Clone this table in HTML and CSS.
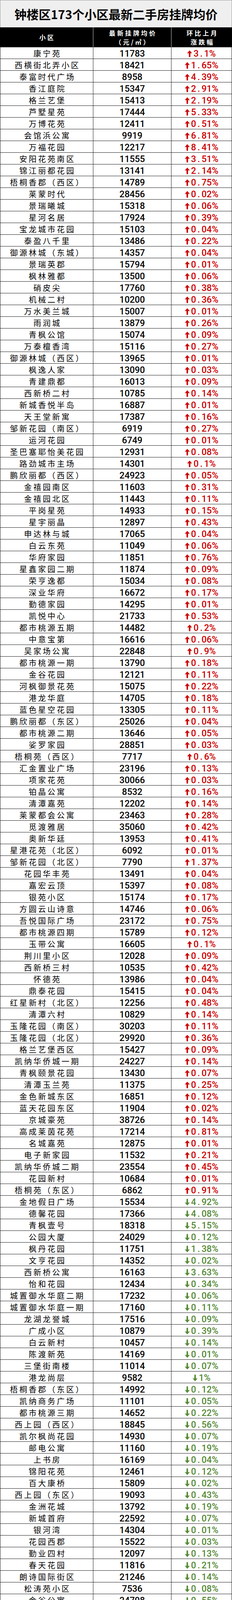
FILE: index.html
```html
<!DOCTYPE html>
<html lang="zh-CN">
<head>
<meta charset="utf-8">
<meta name="viewport" content="width=594, initial-scale=1">
<title>钟楼区173个小区最新二手房挂牌均价</title>
<link rel="stylesheet" href="styles.css">
</head>
<body>
<svg class="defs" aria-hidden="true"><defs>
<symbol id="au" viewBox="0 0 13 17"><path d="M6.5 0 L13 7.6 L8.7 7 L8.2 17 L4.8 17 L4.3 7 L0 7.6 Z"/></symbol>
<symbol id="ad" viewBox="0 0 13 17"><path d="M6.5 17 L13 9.4 L8.7 10 L8.2 0 L4.8 0 L4.3 10 L0 9.4 Z"/></symbol>
</defs></svg>
<div class="sheet">
<div class="title">钟楼区173个小区最新二手房挂牌均价</div>
<div class="head">
<div class="hc c1"><span>小区</span></div>
<div class="hc c2"><span>最新挂牌均价</span><span>（元/㎡）</span></div>
<div class="hc c3"><span>环比上月</span><span>涨跌幅</span></div>
</div>
<div class="row"><div class="name">康宁苑</div><div class="price">11783</div><div class="chg up"><svg class="arw"><use href="#au"/></svg>3<span class="pt">.</span>1%</div></div>
<div class="row"><div class="name">西横街北弄小区</div><div class="price">18421</div><div class="chg up"><svg class="arw"><use href="#au"/></svg>1<span class="pt">.</span>65%</div></div>
<div class="row"><div class="name">泰富时代广场</div><div class="price">8958</div><div class="chg up"><svg class="arw"><use href="#au"/></svg>4<span class="pt">.</span>39%</div></div>
<div class="row"><div class="name">香江庭院</div><div class="price">15347</div><div class="chg up"><svg class="arw"><use href="#au"/></svg>2<span class="pt">.</span>91%</div></div>
<div class="row"><div class="name">格兰艺堡</div><div class="price">15413</div><div class="chg up"><svg class="arw"><use href="#au"/></svg>2<span class="pt">.</span>19%</div></div>
<div class="row"><div class="name">芦墅星苑</div><div class="price">17444</div><div class="chg up"><svg class="arw"><use href="#au"/></svg>5<span class="pt">.</span>33%</div></div>
<div class="row"><div class="name">万博花苑</div><div class="price">12411</div><div class="chg up"><svg class="arw"><use href="#au"/></svg>0<span class="pt">.</span>51%</div></div>
<div class="row"><div class="name">会馆浜公寓</div><div class="price">9919</div><div class="chg up"><svg class="arw"><use href="#au"/></svg>6<span class="pt">.</span>81%</div></div>
<div class="row"><div class="name">万福花园</div><div class="price">12217</div><div class="chg up"><svg class="arw"><use href="#au"/></svg>8<span class="pt">.</span>41%</div></div>
<div class="row"><div class="name">安阳花苑南区</div><div class="price">11555</div><div class="chg up"><svg class="arw"><use href="#au"/></svg>3<span class="pt">.</span>51%</div></div>
<div class="row"><div class="name">锦江丽都花园</div><div class="price">13141</div><div class="chg up"><svg class="arw"><use href="#au"/></svg>2<span class="pt">.</span>14%</div></div>
<div class="row"><div class="name">梧桐香郡（西区）</div><div class="price">14789</div><div class="chg up"><svg class="arw"><use href="#au"/></svg>0<span class="pt">.</span>75%</div></div>
<div class="row"><div class="name">莱蒙时代</div><div class="price">28456</div><div class="chg up"><svg class="arw"><use href="#au"/></svg>0<span class="pt">.</span>02%</div></div>
<div class="row"><div class="name">景瑞曦城</div><div class="price">15318</div><div class="chg up"><svg class="arw"><use href="#au"/></svg>0<span class="pt">.</span>06%</div></div>
<div class="row"><div class="name">星河名居</div><div class="price">17924</div><div class="chg up"><svg class="arw"><use href="#au"/></svg>0<span class="pt">.</span>39%</div></div>
<div class="row"><div class="name">宝龙城市花园</div><div class="price">15103</div><div class="chg up"><svg class="arw"><use href="#au"/></svg>0<span class="pt">.</span>04%</div></div>
<div class="row"><div class="name">泰盈八千里</div><div class="price">13486</div><div class="chg up"><svg class="arw"><use href="#au"/></svg>0<span class="pt">.</span>22%</div></div>
<div class="row"><div class="name">御源林城（东城）</div><div class="price">14357</div><div class="chg up"><svg class="arw"><use href="#au"/></svg>0<span class="pt">.</span>04%</div></div>
<div class="row"><div class="name">景瑞英郡</div><div class="price">15794</div><div class="chg up"><svg class="arw"><use href="#au"/></svg>0<span class="pt">.</span>01%</div></div>
<div class="row"><div class="name">枫林雅都</div><div class="price">13500</div><div class="chg up"><svg class="arw"><use href="#au"/></svg>0<span class="pt">.</span>06%</div></div>
<div class="row"><div class="name">硝皮尖</div><div class="price">17760</div><div class="chg up"><svg class="arw"><use href="#au"/></svg>0<span class="pt">.</span>38%</div></div>
<div class="row"><div class="name">机械二村</div><div class="price">10200</div><div class="chg up"><svg class="arw"><use href="#au"/></svg>0<span class="pt">.</span>36%</div></div>
<div class="row"><div class="name">万水美兰城</div><div class="price">15007</div><div class="chg up"><svg class="arw"><use href="#au"/></svg>0<span class="pt">.</span>01%</div></div>
<div class="row"><div class="name">雨润城</div><div class="price">13879</div><div class="chg up"><svg class="arw"><use href="#au"/></svg>0<span class="pt">.</span>26%</div></div>
<div class="row"><div class="name">青枫公馆</div><div class="price">15074</div><div class="chg up"><svg class="arw"><use href="#au"/></svg>0<span class="pt">.</span>09%</div></div>
<div class="row"><div class="name">万泰檀香湾</div><div class="price">15116</div><div class="chg up"><svg class="arw"><use href="#au"/></svg>0<span class="pt">.</span>27%</div></div>
<div class="row"><div class="name">御源林城（西区）</div><div class="price">13965</div><div class="chg up"><svg class="arw"><use href="#au"/></svg>0<span class="pt">.</span>01%</div></div>
<div class="row"><div class="name">枫逸人家</div><div class="price">13090</div><div class="chg up"><svg class="arw"><use href="#au"/></svg>0<span class="pt">.</span>03%</div></div>
<div class="row"><div class="name">青建鼎都</div><div class="price">16013</div><div class="chg up"><svg class="arw"><use href="#au"/></svg>0<span class="pt">.</span>09%</div></div>
<div class="row"><div class="name">西新桥二村</div><div class="price">10785</div><div class="chg up"><svg class="arw"><use href="#au"/></svg>0<span class="pt">.</span>14%</div></div>
<div class="row"><div class="name">新城香悦半岛</div><div class="price">16887</div><div class="chg up"><svg class="arw"><use href="#au"/></svg>0<span class="pt">.</span>01%</div></div>
<div class="row"><div class="name">天王堂新寓</div><div class="price">17387</div><div class="chg up"><svg class="arw"><use href="#au"/></svg>0<span class="pt">.</span>16%</div></div>
<div class="row"><div class="name">邹新花园（南区）</div><div class="price">6919</div><div class="chg up"><svg class="arw"><use href="#au"/></svg>0<span class="pt">.</span>27%</div></div>
<div class="row"><div class="name">运河花园</div><div class="price">6749</div><div class="chg up"><svg class="arw"><use href="#au"/></svg>0<span class="pt">.</span>01%</div></div>
<div class="row"><div class="name">圣巴塞耶怡美花园</div><div class="price">12931</div><div class="chg up"><svg class="arw"><use href="#au"/></svg>0<span class="pt">.</span>08%</div></div>
<div class="row"><div class="name">路劲城市主场</div><div class="price">14301</div><div class="chg up"><svg class="arw"><use href="#au"/></svg>0<span class="pt">.</span>1%</div></div>
<div class="row"><div class="name">鹏欣丽都（西区）</div><div class="price">24923</div><div class="chg up"><svg class="arw"><use href="#au"/></svg>0<span class="pt">.</span>05%</div></div>
<div class="row"><div class="name">金禧园南区</div><div class="price">11603</div><div class="chg up"><svg class="arw"><use href="#au"/></svg>0<span class="pt">.</span>31%</div></div>
<div class="row"><div class="name">金禧园北区</div><div class="price">11443</div><div class="chg up"><svg class="arw"><use href="#au"/></svg>0<span class="pt">.</span>11%</div></div>
<div class="row"><div class="name">平岗星苑</div><div class="price">14933</div><div class="chg up"><svg class="arw"><use href="#au"/></svg>0<span class="pt">.</span>15%</div></div>
<div class="row"><div class="name">星宇丽晶</div><div class="price">12897</div><div class="chg up"><svg class="arw"><use href="#au"/></svg>0<span class="pt">.</span>43%</div></div>
<div class="row"><div class="name">申达林与城</div><div class="price">17065</div><div class="chg up"><svg class="arw"><use href="#au"/></svg>0<span class="pt">.</span>04%</div></div>
<div class="row"><div class="name">白云东苑</div><div class="price">11049</div><div class="chg up"><svg class="arw"><use href="#au"/></svg>0<span class="pt">.</span>06%</div></div>
<div class="row"><div class="name">华府家园</div><div class="price">11851</div><div class="chg up"><svg class="arw"><use href="#au"/></svg>0<span class="pt">.</span>76%</div></div>
<div class="row"><div class="name">星鑫家园二期</div><div class="price">11874</div><div class="chg up"><svg class="arw"><use href="#au"/></svg>0<span class="pt">.</span>09%</div></div>
<div class="row"><div class="name">荣亨逸都</div><div class="price">15034</div><div class="chg up"><svg class="arw"><use href="#au"/></svg>0<span class="pt">.</span>08%</div></div>
<div class="row"><div class="name">深业华府</div><div class="price">16672</div><div class="chg up"><svg class="arw"><use href="#au"/></svg>0<span class="pt">.</span>17%</div></div>
<div class="row"><div class="name">勤德家园</div><div class="price">14295</div><div class="chg up"><svg class="arw"><use href="#au"/></svg>0<span class="pt">.</span>01%</div></div>
<div class="row"><div class="name">凯悦中心</div><div class="price">21733</div><div class="chg up"><svg class="arw"><use href="#au"/></svg>0<span class="pt">.</span>53%</div></div>
<div class="row"><div class="name">都市桃源五期</div><div class="price">14482</div><div class="chg up"><svg class="arw"><use href="#au"/></svg>0<span class="pt">.</span>2%</div></div>
<div class="row"><div class="name">中意宝第</div><div class="price">16616</div><div class="chg up"><svg class="arw"><use href="#au"/></svg>0<span class="pt">.</span>06%</div></div>
<div class="row"><div class="name">吴家场公寓</div><div class="price">22848</div><div class="chg up"><svg class="arw"><use href="#au"/></svg>0<span class="pt">.</span>9%</div></div>
<div class="row"><div class="name">都市桃源一期</div><div class="price">13790</div><div class="chg up"><svg class="arw"><use href="#au"/></svg>0<span class="pt">.</span>18%</div></div>
<div class="row"><div class="name">金谷花园</div><div class="price">12121</div><div class="chg up"><svg class="arw"><use href="#au"/></svg>0<span class="pt">.</span>11%</div></div>
<div class="row"><div class="name">河枫御景花苑</div><div class="price">15075</div><div class="chg up"><svg class="arw"><use href="#au"/></svg>0<span class="pt">.</span>22%</div></div>
<div class="row"><div class="name">港龙华庭</div><div class="price">14705</div><div class="chg up"><svg class="arw"><use href="#au"/></svg>0<span class="pt">.</span>18%</div></div>
<div class="row"><div class="name">蓝色星空花园</div><div class="price">13305</div><div class="chg up"><svg class="arw"><use href="#au"/></svg>0<span class="pt">.</span>11%</div></div>
<div class="row"><div class="name">鹏欣丽都（东区）</div><div class="price">25026</div><div class="chg up"><svg class="arw"><use href="#au"/></svg>0<span class="pt">.</span>04%</div></div>
<div class="row"><div class="name">都市桃源二期</div><div class="price">13646</div><div class="chg up"><svg class="arw"><use href="#au"/></svg>0<span class="pt">.</span>05%</div></div>
<div class="row"><div class="name">娑罗家园</div><div class="price">28851</div><div class="chg up"><svg class="arw"><use href="#au"/></svg>0<span class="pt">.</span>03%</div></div>
<div class="row"><div class="name">梧桐苑（西区）</div><div class="price">7717</div><div class="chg up"><svg class="arw"><use href="#au"/></svg>0<span class="pt">.</span>6%</div></div>
<div class="row"><div class="name">汇金置业广场</div><div class="price">23196</div><div class="chg up"><svg class="arw"><use href="#au"/></svg>0<span class="pt">.</span>13%</div></div>
<div class="row"><div class="name">项家花苑</div><div class="price">30066</div><div class="chg up"><svg class="arw"><use href="#au"/></svg>0<span class="pt">.</span>03%</div></div>
<div class="row"><div class="name">铂晶公寓</div><div class="price">8532</div><div class="chg up"><svg class="arw"><use href="#au"/></svg>0<span class="pt">.</span>16%</div></div>
<div class="row"><div class="name">清潭嘉苑</div><div class="price">12202</div><div class="chg up"><svg class="arw"><use href="#au"/></svg>0<span class="pt">.</span>14%</div></div>
<div class="row"><div class="name">莱蒙都会公寓</div><div class="price">23463</div><div class="chg up"><svg class="arw"><use href="#au"/></svg>0<span class="pt">.</span>28%</div></div>
<div class="row"><div class="name">觅渡雅居</div><div class="price">35060</div><div class="chg up"><svg class="arw"><use href="#au"/></svg>0<span class="pt">.</span>42%</div></div>
<div class="row"><div class="name">奥新华廷</div><div class="price">13953</div><div class="chg up"><svg class="arw"><use href="#au"/></svg>0<span class="pt">.</span>41%</div></div>
<div class="row"><div class="name">星港花苑（北区）</div><div class="price">6092</div><div class="chg up"><svg class="arw"><use href="#au"/></svg>0<span class="pt">.</span>01%</div></div>
<div class="row"><div class="name">邹新花园（北区）</div><div class="price">7790</div><div class="chg up"><svg class="arw"><use href="#au"/></svg>1<span class="pt">.</span>37%</div></div>
<div class="row"><div class="name">花园华丰苑</div><div class="price">13491</div><div class="chg up"><svg class="arw"><use href="#au"/></svg>0<span class="pt">.</span>04%</div></div>
<div class="row"><div class="name">嘉宏云顶</div><div class="price">15397</div><div class="chg up"><svg class="arw"><use href="#au"/></svg>0<span class="pt">.</span>08%</div></div>
<div class="row"><div class="name">银苑小区</div><div class="price">15174</div><div class="chg up"><svg class="arw"><use href="#au"/></svg>0<span class="pt">.</span>17%</div></div>
<div class="row"><div class="name">方圆云山诗意</div><div class="price">14746</div><div class="chg up"><svg class="arw"><use href="#au"/></svg>0<span class="pt">.</span>06%</div></div>
<div class="row"><div class="name">吾悦国际广场</div><div class="price">23172</div><div class="chg up"><svg class="arw"><use href="#au"/></svg>0<span class="pt">.</span>75%</div></div>
<div class="row"><div class="name">都市桃源四期</div><div class="price">15789</div><div class="chg up"><svg class="arw"><use href="#au"/></svg>0<span class="pt">.</span>12%</div></div>
<div class="row"><div class="name">玉带公寓</div><div class="price">16605</div><div class="chg up"><svg class="arw"><use href="#au"/></svg>0<span class="pt">.</span>1%</div></div>
<div class="row"><div class="name">荆川里小区</div><div class="price">12028</div><div class="chg up"><svg class="arw"><use href="#au"/></svg>0<span class="pt">.</span>09%</div></div>
<div class="row"><div class="name">西新桥三村</div><div class="price">10535</div><div class="chg up"><svg class="arw"><use href="#au"/></svg>0<span class="pt">.</span>42%</div></div>
<div class="row"><div class="name">怀德苑</div><div class="price">13986</div><div class="chg up"><svg class="arw"><use href="#au"/></svg>0<span class="pt">.</span>04%</div></div>
<div class="row"><div class="name">鼎泰花园</div><div class="price">15415</div><div class="chg up"><svg class="arw"><use href="#au"/></svg>0<span class="pt">.</span>04%</div></div>
<div class="row"><div class="name">红星新村（北区）</div><div class="price">12256</div><div class="chg up"><svg class="arw"><use href="#au"/></svg>0<span class="pt">.</span>48%</div></div>
<div class="row"><div class="name">清潭六村</div><div class="price">10829</div><div class="chg up"><svg class="arw"><use href="#au"/></svg>0<span class="pt">.</span>14%</div></div>
<div class="row"><div class="name">玉隆花园（南区）</div><div class="price">30203</div><div class="chg up"><svg class="arw"><use href="#au"/></svg>0<span class="pt">.</span>11%</div></div>
<div class="row"><div class="name">玉隆花园（北区）</div><div class="price">29920</div><div class="chg up"><svg class="arw"><use href="#au"/></svg>0<span class="pt">.</span>36%</div></div>
<div class="row"><div class="name">格兰艺堡西区</div><div class="price">15427</div><div class="chg up"><svg class="arw"><use href="#au"/></svg>0<span class="pt">.</span>09%</div></div>
<div class="row"><div class="name">凯纳华侨城一期</div><div class="price">24227</div><div class="chg up"><svg class="arw"><use href="#au"/></svg>0<span class="pt">.</span>14%</div></div>
<div class="row"><div class="name">青枫颐景花园</div><div class="price">13430</div><div class="chg up"><svg class="arw"><use href="#au"/></svg>0<span class="pt">.</span>07%</div></div>
<div class="row"><div class="name">清潭玉兰苑</div><div class="price">11375</div><div class="chg up"><svg class="arw"><use href="#au"/></svg>0<span class="pt">.</span>25%</div></div>
<div class="row"><div class="name">金色新城东区</div><div class="price">16851</div><div class="chg up"><svg class="arw"><use href="#au"/></svg>0<span class="pt">.</span>12%</div></div>
<div class="row"><div class="name">蓝天花园东区</div><div class="price">11904</div><div class="chg up"><svg class="arw"><use href="#au"/></svg>0<span class="pt">.</span>02%</div></div>
<div class="row"><div class="name">京城豪苑</div><div class="price">38726</div><div class="chg up"><svg class="arw"><use href="#au"/></svg>0<span class="pt">.</span>14%</div></div>
<div class="row"><div class="name">高成莱茵花苑</div><div class="price">17214</div><div class="chg up"><svg class="arw"><use href="#au"/></svg>0<span class="pt">.</span>81%</div></div>
<div class="row"><div class="name">名城嘉苑</div><div class="price">12875</div><div class="chg up"><svg class="arw"><use href="#au"/></svg>0<span class="pt">.</span>01%</div></div>
<div class="row"><div class="name">电子新家园</div><div class="price">11532</div><div class="chg up"><svg class="arw"><use href="#au"/></svg>0<span class="pt">.</span>21%</div></div>
<div class="row"><div class="name">凯纳华侨城二期</div><div class="price">23554</div><div class="chg up"><svg class="arw"><use href="#au"/></svg>0<span class="pt">.</span>45%</div></div>
<div class="row"><div class="name">花园新村</div><div class="price">10684</div><div class="chg up"><svg class="arw"><use href="#au"/></svg>0<span class="pt">.</span>01%</div></div>
<div class="row"><div class="name">梧桐苑（东区）</div><div class="price">6862</div><div class="chg up"><svg class="arw"><use href="#au"/></svg>0<span class="pt">.</span>91%</div></div>
<div class="row"><div class="name">金地假日广场</div><div class="price">15534</div><div class="chg down"><svg class="arw"><use href="#ad"/></svg>4<span class="pt">.</span>92%</div></div>
<div class="row"><div class="name">德馨花园</div><div class="price">17366</div><div class="chg down"><svg class="arw"><use href="#ad"/></svg>4<span class="pt">.</span>08%</div></div>
<div class="row"><div class="name">青枫壹号</div><div class="price">18318</div><div class="chg down"><svg class="arw"><use href="#ad"/></svg>5<span class="pt">.</span>15%</div></div>
<div class="row"><div class="name">公园大厦</div><div class="price">24029</div><div class="chg down"><svg class="arw"><use href="#ad"/></svg>0<span class="pt">.</span>12%</div></div>
<div class="row"><div class="name">枫丹花园</div><div class="price">11751</div><div class="chg down"><svg class="arw"><use href="#ad"/></svg>1<span class="pt">.</span>38%</div></div>
<div class="row"><div class="name">文亨花园</div><div class="price">14352</div><div class="chg down"><svg class="arw"><use href="#ad"/></svg>0<span class="pt">.</span>02%</div></div>
<div class="row"><div class="name">西新桥公寓</div><div class="price">16163</div><div class="chg down"><svg class="arw"><use href="#ad"/></svg>3<span class="pt">.</span>63%</div></div>
<div class="row"><div class="name">怡和花园</div><div class="price">12434</div><div class="chg down"><svg class="arw"><use href="#ad"/></svg>0<span class="pt">.</span>34%</div></div>
<div class="row"><div class="name">城置御水华庭二期</div><div class="price">17232</div><div class="chg down"><svg class="arw"><use href="#ad"/></svg>0<span class="pt">.</span>06%</div></div>
<div class="row"><div class="name">城置御水华庭一期</div><div class="price">17160</div><div class="chg down"><svg class="arw"><use href="#ad"/></svg>0<span class="pt">.</span>11%</div></div>
<div class="row"><div class="name">龙湖龙誉城</div><div class="price">17516</div><div class="chg down"><svg class="arw"><use href="#ad"/></svg>0<span class="pt">.</span>09%</div></div>
<div class="row"><div class="name">广成小区</div><div class="price">10879</div><div class="chg down"><svg class="arw"><use href="#ad"/></svg>0<span class="pt">.</span>39%</div></div>
<div class="row"><div class="name">白云新村</div><div class="price">10457</div><div class="chg down"><svg class="arw"><use href="#ad"/></svg>0<span class="pt">.</span>14%</div></div>
<div class="row"><div class="name">陈渡新苑</div><div class="price">14169</div><div class="chg down"><svg class="arw"><use href="#ad"/></svg>0<span class="pt">.</span>01%</div></div>
<div class="row"><div class="name">三堡街南楼</div><div class="price">11014</div><div class="chg down"><svg class="arw"><use href="#ad"/></svg>0<span class="pt">.</span>07%</div></div>
<div class="row"><div class="name">港龙尚层</div><div class="price">9582</div><div class="chg down"><svg class="arw"><use href="#ad"/></svg>1%</div></div>
<div class="row"><div class="name">梧桐香郡（东区）</div><div class="price">14992</div><div class="chg down"><svg class="arw"><use href="#ad"/></svg>0<span class="pt">.</span>12%</div></div>
<div class="row"><div class="name">凯纳商务广场</div><div class="price">11101</div><div class="chg down"><svg class="arw"><use href="#ad"/></svg>0<span class="pt">.</span>05%</div></div>
<div class="row"><div class="name">都市桃源三期</div><div class="price">14652</div><div class="chg down"><svg class="arw"><use href="#ad"/></svg>0<span class="pt">.</span>22%</div></div>
<div class="row"><div class="name">西上园（西区）</div><div class="price">18845</div><div class="chg down"><svg class="arw"><use href="#ad"/></svg>0<span class="pt">.</span>56%</div></div>
<div class="row"><div class="name">凯尔枫尚花园</div><div class="price">14930</div><div class="chg down"><svg class="arw"><use href="#ad"/></svg>0<span class="pt">.</span>07%</div></div>
<div class="row"><div class="name">邮电公寓</div><div class="price">11160</div><div class="chg down"><svg class="arw"><use href="#ad"/></svg>0<span class="pt">.</span>19%</div></div>
<div class="row"><div class="name">上书房</div><div class="price">16169</div><div class="chg down"><svg class="arw"><use href="#ad"/></svg>0<span class="pt">.</span>04%</div></div>
<div class="row"><div class="name">锦阳花苑</div><div class="price">12461</div><div class="chg down"><svg class="arw"><use href="#ad"/></svg>0<span class="pt">.</span>12%</div></div>
<div class="row"><div class="name">百大康桥</div><div class="price">15809</div><div class="chg down"><svg class="arw"><use href="#ad"/></svg>0<span class="pt">.</span>02%</div></div>
<div class="row"><div class="name">西上园（东区）</div><div class="price">19093</div><div class="chg down"><svg class="arw"><use href="#ad"/></svg>0<span class="pt">.</span>43%</div></div>
<div class="row"><div class="name">金洲花城</div><div class="price">13792</div><div class="chg down"><svg class="arw"><use href="#ad"/></svg>0<span class="pt">.</span>19%</div></div>
<div class="row"><div class="name">新城首府</div><div class="price">22592</div><div class="chg down"><svg class="arw"><use href="#ad"/></svg>0<span class="pt">.</span>07%</div></div>
<div class="row"><div class="name">银河湾</div><div class="price">14304</div><div class="chg down"><svg class="arw"><use href="#ad"/></svg>0<span class="pt">.</span>01%</div></div>
<div class="row"><div class="name">花园西郡</div><div class="price">15522</div><div class="chg down"><svg class="arw"><use href="#ad"/></svg>0<span class="pt">.</span>03%</div></div>
<div class="row"><div class="name">勤业四村</div><div class="price">12097</div><div class="chg down"><svg class="arw"><use href="#ad"/></svg>0<span class="pt">.</span>13%</div></div>
<div class="row"><div class="name">春天花园</div><div class="price">11816</div><div class="chg down"><svg class="arw"><use href="#ad"/></svg>0<span class="pt">.</span>21%</div></div>
<div class="row"><div class="name">朗诗国际街区</div><div class="price">21246</div><div class="chg down"><svg class="arw"><use href="#ad"/></svg>0<span class="pt">.</span>14%</div></div>
<div class="row"><div class="name">松涛苑小区</div><div class="price">7536</div><div class="chg down"><svg class="arw"><use href="#ad"/></svg>0<span class="pt">.</span>08%</div></div>
<div class="row"><div class="name">金谷公寓</div><div class="price">24798</div><div class="chg down"><svg class="arw"><use href="#ad"/></svg>0<span class="pt">.</span>55%</div></div>
<div class="row"><div class="name">新奥佳园</div><div class="price">13238</div><div class="chg down"><svg class="arw"><use href="#ad"/></svg>0<span class="pt">.</span>54%</div></div>
<div class="row"><div class="name">丽丰苑</div><div class="price">10536</div><div class="chg down"><svg class="arw"><use href="#ad"/></svg>0<span class="pt">.</span>35%</div></div>
<div class="row"><div class="name">荷花池公寓</div><div class="price">26573</div><div class="chg down"><svg class="arw"><use href="#ad"/></svg>0<span class="pt">.</span>14%</div></div>
<div class="row"><div class="name">景瑞铂庭</div><div class="price">15548</div><div class="chg down"><svg class="arw"><use href="#ad"/></svg>0<span class="pt">.</span>63%</div></div>
<div class="row"><div class="name">安阳花苑北区</div><div class="price">13340</div><div class="chg down"><svg class="arw"><use href="#ad"/></svg>0<span class="pt">.</span>91%</div></div>
<div class="row"><div class="name">嘉城尚郡</div><div class="price">22574</div><div class="chg down"><svg class="arw"><use href="#ad"/></svg>3<span class="pt">.</span>45%</div></div>
<div class="row"><div class="name">清潭南苑</div><div class="price">11062</div><div class="chg down"><svg class="arw"><use href="#ad"/></svg>0<span class="pt">.</span>04%</div></div>
<div class="row"><div class="name">清潭鑫苑</div><div class="price">12447</div><div class="chg down"><svg class="arw"><use href="#ad"/></svg>0<span class="pt">.</span>4%</div></div>
<div class="row"><div class="name">璞丽湾花园</div><div class="price">18559</div><div class="chg down"><svg class="arw"><use href="#ad"/></svg>0<span class="pt">.</span>06%</div></div>
<div class="row"><div class="name">健身路小区</div><div class="price">17676</div><div class="chg down"><svg class="arw"><use href="#ad"/></svg>2<span class="pt">.</span>12%</div></div>
<div class="row"><div class="name">河景花园</div><div class="price">18436</div><div class="chg down"><svg class="arw"><use href="#ad"/></svg>0<span class="pt">.</span>01%</div></div>
<div class="row"><div class="name">桂花园</div><div class="price">15380</div><div class="chg down"><svg class="arw"><use href="#ad"/></svg>0<span class="pt">.</span>05%</div></div>
<div class="row"><div class="name">清潭花苑</div><div class="price">12867</div><div class="chg down"><svg class="arw"><use href="#ad"/></svg>0<span class="pt">.</span>02%</div></div>
<div class="row"><div class="name">天皇堂公寓</div><div class="price">20484</div><div class="chg down"><svg class="arw"><use href="#ad"/></svg>0<span class="pt">.</span>06%</div></div>
<div class="row"><div class="name">云庭公寓</div><div class="price">26755</div><div class="chg down"><svg class="arw"><use href="#ad"/></svg>0<span class="pt">.</span>01%</div></div>
<div class="row"><div class="name">兰亭苑</div><div class="price">12929</div><div class="chg down"><svg class="arw"><use href="#ad"/></svg>0<span class="pt">.</span>03%</div></div>
<div class="row"><div class="name">北新巷小区</div><div class="price">10449</div><div class="chg down"><svg class="arw"><use href="#ad"/></svg>0<span class="pt">.</span>57%</div></div>
<div class="row"><div class="name">名骏家园</div><div class="price">26530</div><div class="chg down"><svg class="arw"><use href="#ad"/></svg>0<span class="pt">.</span>35%</div></div>
<div class="row"><div class="name">金色新城西区</div><div class="price">17220</div><div class="chg down"><svg class="arw"><use href="#ad"/></svg>0<span class="pt">.</span>17%</div></div>
<div class="row"><div class="name">常宁公寓</div><div class="price">10831</div><div class="chg down"><svg class="arw"><use href="#ad"/></svg>0<span class="pt">.</span>18%</div></div>
<div class="row"><div class="name">机械新村</div><div class="price">10675</div><div class="chg down"><svg class="arw"><use href="#ad"/></svg>0<span class="pt">.</span>04%</div></div>
<div class="row"><div class="name">芦墅广景苑</div><div class="price">12390</div><div class="chg down"><svg class="arw"><use href="#ad"/></svg>0<span class="pt">.</span>13%</div></div>
<div class="row"><div class="name">东方国际公寓</div><div class="price">28363</div><div class="chg down"><svg class="arw"><use href="#ad"/></svg>0<span class="pt">.</span>16%</div></div>
<div class="row"><div class="name">勤业新村</div><div class="price">11477</div><div class="chg down"><svg class="arw"><use href="#ad"/></svg>0<span class="pt">.</span>07%</div></div>
<div class="row"><div class="name">星盛家园</div><div class="price">13440</div><div class="chg down"><svg class="arw"><use href="#ad"/></svg>0<span class="pt">.</span>19%</div></div>
<div class="row"><div class="name">蓝天花园西区</div><div class="price">12067</div><div class="chg down"><svg class="arw"><use href="#ad"/></svg>0<span class="pt">.</span>14%</div></div>
<div class="row"><div class="name">天禧星园</div><div class="price">26457</div><div class="chg down"><svg class="arw"><use href="#ad"/></svg>0<span class="pt">.</span>26%</div></div>
<div class="row"><div class="name">香江华廷花园</div><div class="price">17504</div><div class="chg down"><svg class="arw"><use href="#ad"/></svg>0<span class="pt">.</span>1%</div></div>
<div class="row"><div class="name">金色领寓</div><div class="price">15339</div><div class="chg down"><svg class="arw"><use href="#ad"/></svg>0<span class="pt">.</span>14%</div></div>
<div class="row"><div class="name">保利公园九里</div><div class="price">15775</div><div class="chg flat">持平</div></div>
<div class="row"><div class="name">北直街小区</div><div class="price">29804</div><div class="chg flat">持平</div></div>
<div class="row"><div class="name">紫阳花园</div><div class="price">13017</div><div class="chg flat">持平</div></div>
<div class="row"><div class="name">蓝天新苑</div><div class="price">15871</div><div class="chg flat">持平</div></div>
<div class="row"><div class="name">乐颐大厦</div><div class="price">12894</div><div class="chg flat">持平</div></div>
<div class="row"><div class="name">金玉苑</div><div class="price">11855</div><div class="chg flat">持平</div></div>
<div class="row"><div class="name">花之园</div><div class="price">11976</div><div class="chg flat">持平</div></div>
<div class="row"><div class="name">星港花苑（南区）</div><div class="price">6296</div><div class="chg flat">持平</div></div>
<div class="row"><div class="name">早科坊大厦</div><div class="price">20077</div><div class="chg flat">持平</div></div>
<div class="row"><div class="name">翡翠湾</div><div class="price">15626</div><div class="chg flat">持平</div></div>
<div class="row"><div class="name">华林家园</div><div class="price">7500</div><div class="chg flat">持平</div></div>
</div>
</body>
</html>
```

FILE: styles.css
```css
* {
  box-sizing: border-box;
  margin: 0;
  padding: 0;
}

html {
  -webkit-text-size-adjust: 100%;
  text-size-adjust: 100%;
  background: #ffffff;
}

body {
  width: 594px;
  background: #ffffff;
  font-family: "Noto Sans CJK SC", "Noto Sans", sans-serif;
  color: #000;
}

.defs {
  position: absolute;
  width: 0;
  height: 0;
  overflow: hidden;
}

.sheet {
  width: 594px;
}

.title {
  height: 70px;
  background: #efefef;
  border: 1px solid #9c9c9c;
  border-bottom: none;
  display: flex;
  align-items: center;
  justify-content: center;
  font-size: 31px;
  font-weight: 700;
  color: #050505;
}

.head {
  height: 51px;
  background: #000;
  color: #fff;
  display: flex;
}

.hc {
  display: flex;
  flex-direction: column;
  align-items: center;
  justify-content: center;
  font-size: 16px;
  font-weight: 700;
  line-height: 23px;
  letter-spacing: 4.5px;
  padding-left: 4.5px;
}

.hc.c1 {
  width: 238px;
}

.hc.c2 {
  width: 200px;
  border-left: 1px solid #d0d0d0;
}

.hc.c3 {
  flex: 1;
  border-left: 1px solid #d0d0d0;
}

.row {
  height: 30px;
  display: flex;
  border-left: 1px solid #1e1e1e;
  border-right: 1px solid #1e1e1e;
  border-bottom: 1px solid #1e1e1e;
}

.row > div {
  height: 29px;
  display: flex;
  align-items: center;
  justify-content: center;
  white-space: nowrap;
}

.row > div + div {
  border-left: 1px solid #1e1e1e;
}

.name {
  width: 237px;
  font-size: 20px;
  letter-spacing: 4px;
  padding-left: 4px;
  padding-top: 1px;
}

.price {
  width: 200px;
  font-family: Roboto, "Liberation Sans", sans-serif;
  font-weight: 500;
  font-size: 23px;
  padding-top: 4px;
}

.chg {
  flex: 1;
  font-family: Roboto, "Liberation Sans", sans-serif;
  font-weight: 500;
  font-size: 23px;
  padding-top: 4px;
}

.chg.up {
  color: #cc0000;
}

.chg.down {
  color: #558a35;
}

.chg.flat {
  font-family: "Noto Sans CJK SC", sans-serif;
  font-weight: 400;
  font-size: 20px;
  letter-spacing: 3px;
  padding-left: 3px;
  padding-top: 1px;
  color: #000;
}

.arw {
  width: 13px;
  height: 17px;
  fill: currentColor;
  margin-right: 3px;
  flex: none;
}

.pt {
  display: inline-block;
  width: 14px;
  text-align: center;
}
```
